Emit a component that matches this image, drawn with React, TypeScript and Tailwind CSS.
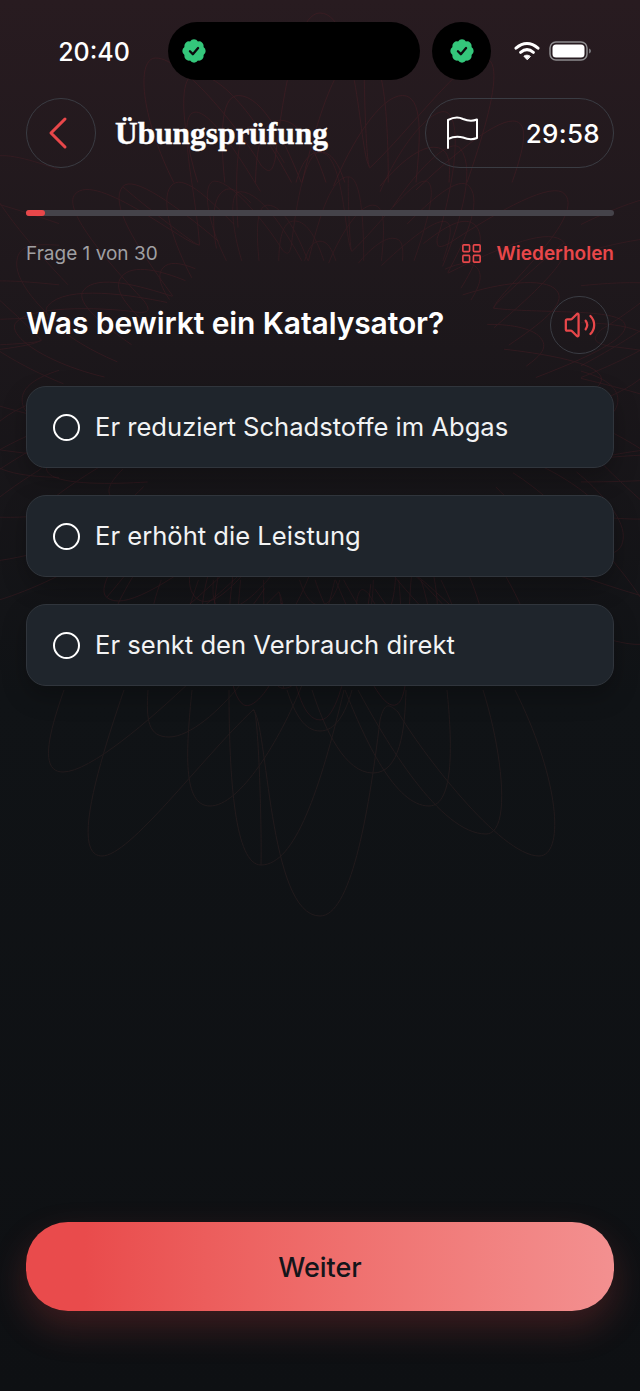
import { ChevronLeft, LayoutGrid, Volume2 } from 'lucide-react';

const options = ['Er reduziert Schadstoffe im Abgas', 'Er erhöht die Leistung', 'Er senkt den Verbrauch direkt'];

// loops of the background rosette, hand traced from the lower half
const loops = [
  'M64 690 C50 730 38 772 63 772 C90 772 150 720 192 680',
  'M124 690 C100 760 70 856 102 856 C130 856 200 760 253 710 C258 700 262 825 261 865',
  'M148 690 C146 720 148 737 169 737 C190 737 220 710 240 685',
  'M192 690 C186 750 182 806 210 806 C240 806 280 740 302 685',
  'M229 690 C229 780 235 865 261 865 C295 865 320 790 344 690',
  'M253 710 C268 720 268 916 320 916 C350 916 368 820 380 720 C385 700 390 705 398 712 C420 750 500 856 539 856 C565 856 560 780 515 690',
  'M287 690 C295 715 305 731 320 731 C335 731 345 715 352 690',
  'M312 690 C325 730 345 773 373 773 C400 773 405 730 406 690',
  'M345 690 C365 740 395 806 429 806 C455 806 452 740 447 690',
  'M358 690 C385 740 440 834 486 834 C512 834 502 750 483 690',
];

const rings = [
  { angle: 180, scale: 0.75, opacity: 0.5 },
  { angle: 90, scale: 0.9, opacity: 0.4 },
  { angle: 270, scale: 0.9, opacity: 0.4 },
  { angle: 40, scale: 0.62, opacity: 0.4 },
  { angle: 130, scale: 0.62, opacity: 0.45 },
  { angle: 230, scale: 0.62, opacity: 0.45 },
  { angle: 320, scale: 0.62, opacity: 0.4 },
  { angle: 0, scale: 0.62, opacity: 0.35 },
  { angle: 180, scale: 0.48, opacity: 0.4 },
];

function Backdrop() {
  return (
    <svg className="absolute inset-0 pointer-events-none" width="640" height="1391" viewBox="0 0 640 1391" fill="none">
      <g stroke="#211a1c">
        {loops.map((d) => (
          <path key={d} d={d} />
        ))}
      </g>
      {rings.map((ring) => (
        <g
          key={`${ring.angle}-${ring.scale}`}
          stroke="#4a1e25"
          opacity={ring.opacity}
          transform={`translate(320 400) rotate(${ring.angle}) scale(${ring.scale}) translate(-320 -400)`}
        >
          {loops.map((d) => (
            <path key={d} d={d} vectorEffect="non-scaling-stroke" />
          ))}
        </g>
      ))}
    </svg>
  );
}

function Verified() {
  return (
    <svg width="28" height="28" viewBox="0 0 24 24">
      <path
        d="M3.85 8.62a4 4 0 0 1 4.78-4.77 4 4 0 0 1 6.74 0 4 4 0 0 1 4.78 4.78 4 4 0 0 1 0 6.74 4 4 0 0 1-4.77 4.78 4 4 0 0 1-6.75 0 4 4 0 0 1-4.78-4.77 4 4 0 0 1 0-6.76Z"
        fill="#34c77b"
      />
      <path d="m8.5 12.2 2.5 2.5 4.5-5.2" fill="none" stroke="#0b0b0d" strokeWidth="2" strokeLinecap="round" strokeLinejoin="round" />
    </svg>
  );
}

function StatusBar() {
  return (
    <div className="relative flex items-center h-[58px] mt-[22px]">
      <span className="w-[168px] pl-[20px] pt-[3px] text-center text-[25px] font-medium text-white">20:40</span>
      <div className="flex items-center w-[252px] h-[58px] rounded-[29px] bg-black pl-[12px]">
        <Verified />
      </div>
      <div className="flex items-center justify-center w-[59px] h-[58px] ml-[12px] rounded-full bg-black">
        <Verified />
      </div>
      <svg className="ml-[23px]" width="26" height="20" viewBox="0 0 26 20" fill="none" stroke="#fff" strokeLinecap="round">
        <path d="M2 7.2C9 1 17 1 24 7.2" strokeWidth="3" />
        <path d="M6.6 11.4c4-3.4 8.8-3.4 12.8 0" strokeWidth="3" />
        <path d="M13 18.5 9.9 15.2c1.9-1.4 4.3-1.4 6.2 0Z" fill="#fff" stroke="#fff" strokeWidth="1" strokeLinejoin="round" />
      </svg>
      <svg className="ml-[9px]" width="42" height="22" viewBox="0 0 42 22" fill="none">
        <rect x="1" y="2" width="37" height="18" rx="6" stroke="#8d8c8e" strokeWidth="1.5" />
        <rect x="3.5" y="4.5" width="32" height="13" rx="3.5" fill="#fff" />
        <path d="M40 8.5c1.4.4 2 1.3 2 2.5s-.6 2.1-2 2.5Z" fill="#77767a" />
      </svg>
    </div>
  );
}

export default function App() {
  return (
    <div
      className="relative w-[640px] h-[1391px] overflow-hidden bg-gradient-to-b from-[#281b20] via-[#101316] via-50% to-[#0e1013] text-white"
      style={{ fontFamily: 'Inter, "Noto Sans", sans-serif' }}
    >
      <Backdrop />
      <div className="relative flex flex-col h-full">
        <StatusBar />

        <div className="flex items-center justify-between mt-[18px] px-[26px]">
          <div className="flex items-center gap-[19px]">
            <button className="flex items-center justify-center w-[70px] h-[70px] rounded-full border border-[#3a3c43]">
              <ChevronLeft size={56} strokeWidth={1.3} className="text-[#e8474a] -ml-[6px]" />
            </button>
            <h1
              className="pt-[2px] text-[31.4px] leading-none font-bold text-white [-webkit-text-stroke:0.4px_white]"
              style={{ fontFamily: '"Liberation Serif", serif' }}
            >
              Übungsprüfung
            </h1>
          </div>
          <div className="flex items-center justify-between w-[189px] h-[70px] pl-[20px] pr-[13px] rounded-[35px] border border-[#3a3c43]">
            <svg width="33" height="34" viewBox="0 0 33 34" fill="none" stroke="#fff" strokeWidth="2" strokeLinecap="round" strokeLinejoin="round">
              <path d="M2 32V4C8 1 13 1 17 3c5 2 9 2.500 14 .5V22c-5 2-9 1.500-14-.5-5-1.500-10-1-15 1.500" />
            </svg>
            <span className="text-[26px] font-medium tracking-[0.3px]">29:58</span>
          </div>
        </div>

        <div className="mx-[26px] mt-[42px] h-[6px] rounded-full bg-[#45434a]">
          <div className="w-[19px] h-full rounded-full bg-[#e8474a]" />
        </div>

        <div className="flex items-center justify-between mt-[26px] px-[26px]">
          <span className="text-[19px] leading-[22px] text-[#a0a0a3]">Frage 1 von 30</span>
          <div className="flex items-center gap-[13px] text-[#e8474a]">
            <LayoutGrid size={23} strokeWidth={1.7} />
            <span className="text-[19px] leading-[22px] font-semibold">Wiederholen</span>
          </div>
        </div>

        <div className="flex items-center justify-between mt-[31px] pl-[26px] pr-[31px]">
          <h2 className="text-[30px] leading-[38px] font-semibold tracking-[-0.1px] -mt-[4px]">Was bewirkt ein Katalysator?</h2>
          <div className="flex items-center justify-center w-[59px] h-[58px] rounded-full border border-[#3a3c43]">
            <Volume2 size={34} strokeWidth={1.6} className="text-[#e8474a]" />
          </div>
        </div>

        <div className="flex flex-col gap-[27px] mt-[32px] px-[26px]">
          {options.map((option) => (
            <div
              key={option}
              className="flex items-center gap-[15px] h-[82px] pl-[26px] rounded-[20px] border border-[#30353c] bg-[#1f252c] shadow-[0_10px_24px_rgba(0,0,0,0.25)]"
            >
              <span className="w-[27px] h-[27px] rounded-full border-[2.5px] border-white" />
              <span className="text-[25.6px] leading-[32px] text-[#f2f3f4]">{option}</span>
            </div>
          ))}
        </div>

        <div className="mt-auto px-[26px] pb-[80px]">
          <button className="w-full h-[89px] pt-[3px] rounded-[42px] bg-gradient-to-r from-[#e94b4c] from-10% to-[#f39090] text-[27px] font-medium text-[#14151a] shadow-[0_16px_36px_rgba(232,71,74,0.22)]">
            Weiter
          </button>
        </div>
      </div>
    </div>
  );
}
